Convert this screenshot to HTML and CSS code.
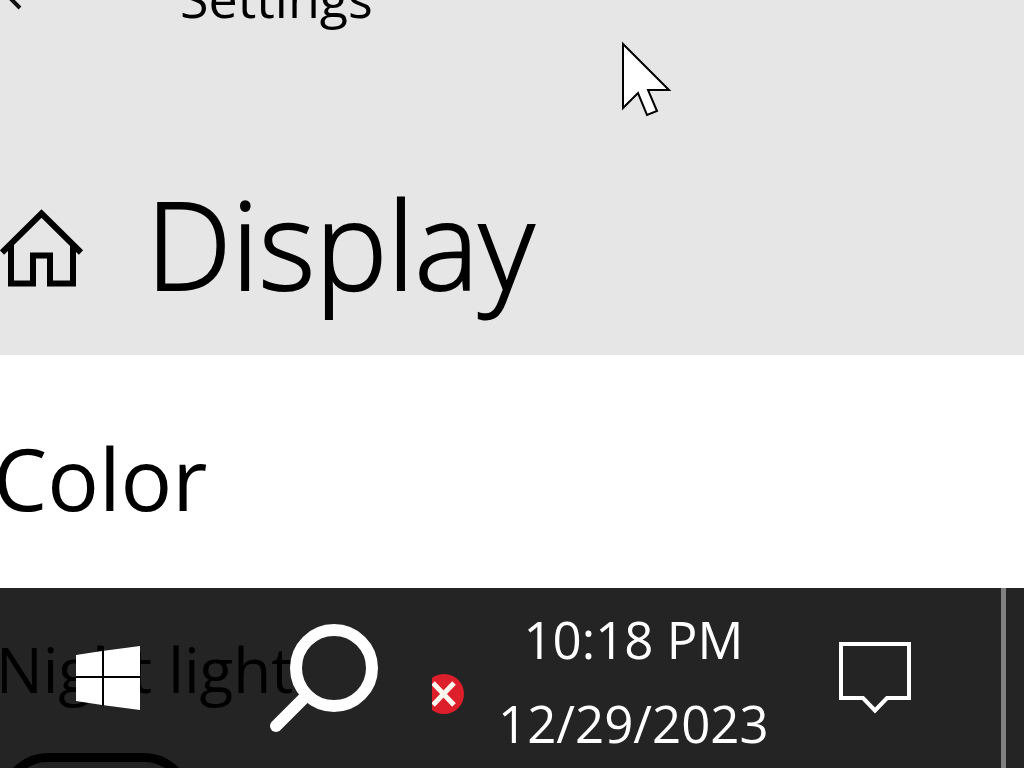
FILE: index.html
```html
<!DOCTYPE html>
<html lang="en">
<head>
<meta charset="utf-8">
<title>Settings</title>
<link rel="stylesheet" href="styles.css">
</head>
<body>
<header class="header">
  <div class="titlebar">
    <button class="plain back" aria-label="Back">
      <svg width="24" height="60" viewBox="0 0 24 60" fill="none" stroke="#111" stroke-width="4"><path d="M20 40L-2 18L20 -4"/></svg>
    </button>
    <span class="app-name">Settings</span>
  </div>
  <div class="page-heading">
    <button class="plain home" aria-label="Home">
      <svg width="84" height="96" viewBox="0 195 84 96" fill="none" stroke="#000" stroke-width="6"><path d="M2 252.500L41.500 213.500L81 252.500M11 244V283.500H33V255.500H50V283.500H73V244"/></svg>
    </button>
    <h1 class="title">Display</h1>
  </div>
</header>
<main class="content">
  <h2 class="section-title">Color</h2>
  <label class="setting-label" for="night">Night light</label>
  <input class="switch" id="night" type="checkbox" role="switch">
</main>
<footer class="taskbar">
  <button class="plain start" aria-label="Start">
    <svg width="64" height="64" viewBox="0 0 64 64"><path fill="#000" d="M26 0H28V60H26ZM0 30H64V32H0Z"/><path fill="#fff" d="M0 9L26 5V30H0ZM28 4.700L64 0V30H28ZM0 32H26V59L0 55ZM28 32H64V64L28 59.300Z"/></svg>
  </button>
  <button class="plain search" aria-label="Search">
    <svg width="108" height="108" viewBox="0 0 108 108" fill="none" stroke="#fff"><circle cx="64" cy="44" r="38" stroke-width="12"/><path d="M37 71L6 102" stroke-width="12" stroke-linecap="round"/></svg>
  </button>
  <button class="plain status" aria-label="Status: error">
    <svg width="32" height="40" viewBox="0 0 32 40"><circle cx="12" cy="20" r="20" fill="#dc1f2b"/><path d="M1 9L22 31M22 9L1 31" stroke="#fff8ee" stroke-width="5"/></svg>
  </button>
  <button class="plain clock"><time>10:18 PM</time><time>12/29/2023</time></button>
  <button class="plain notifications" aria-label="Notifications">
    <svg width="72" height="72" viewBox="0 0 72 72" fill="none" stroke="#fff" stroke-width="4"><path d="M2 2H70V56H48L36 68.500L24 56H2Z"/></svg>
  </button>
  <button class="plain show-desktop" aria-label="Show desktop"></button>
</footer>
<svg class="cursor" width="52" height="78" viewBox="620 40 52 78" fill="#fff" stroke="#000" stroke-width="2" aria-hidden="true"><path d="M623 44V108L638 93L647 115L657 111L648 90H669Z"/></svg>
</body>
</html>
```
FILE: styles.css
```css
* { box-sizing: border-box; }
body {
  margin: 0;
  height: 100vh;
  overflow: hidden;
  position: relative;
  background: #fff;
  color: #000;
  font-family: "Open Sans", "Noto Sans", sans-serif;
}
.plain {
  padding: 0;
  border: 0;
  background: none;
  color: inherit;
  font: inherit;
}
.plain svg { display: block; }
.header {
  overflow: hidden;
  padding-bottom: 32px;
  background: #e6e6e6;
}
.titlebar {
  display: flex;
  gap: 156px;
  margin-top: -32px;
  margin-bottom: 135px;
}
.app-name { font-size: 52px; line-height: 60px; }
.page-heading { display: flex; align-items: center; gap: 62px; }
.title {
  margin: 0;
  font-size: 121px;
  font-weight: 300;
  line-height: 160px;
  -webkit-text-stroke: 2px #000;
}
.content { padding-top: 63px; }
.section-title {
  margin: 0 0 91px -7px;
  font-size: 86px;
  font-weight: 400;
  line-height: 120px;
}
.setting-label {
  display: block;
  margin: 0 0 44px -4px;
  font-size: 62px;
  line-height: 80px;
}
.switch {
  appearance: none;
  display: block;
  width: 192px;
  height: 96px;
  margin: 0;
  border: 9px solid #000;
  border-radius: 48px;
}
.taskbar {
  position: absolute;
  inset: auto 0 0;
  display: flex;
  align-items: center;
  height: 180px;
  padding-left: 76px;
  background: rgba(0, 0, 0, 0.86);
  color: #fff;
}
.search { margin-left: 130px; }
.status { margin: 32px 34px 0 54px; }
.clock {
  display: flex;
  flex-direction: column;
  align-items: center;
  padding-top: 5px;
  font-size: 51px;
  line-height: 84px;
}
.notifications { margin-left: auto; margin-right: 90px; }
.show-desktop {
  align-self: stretch;
  width: 23px;
  border-left: 5px solid #808080;
}
.cursor { position: absolute; left: 620px; top: 40px; }
```
